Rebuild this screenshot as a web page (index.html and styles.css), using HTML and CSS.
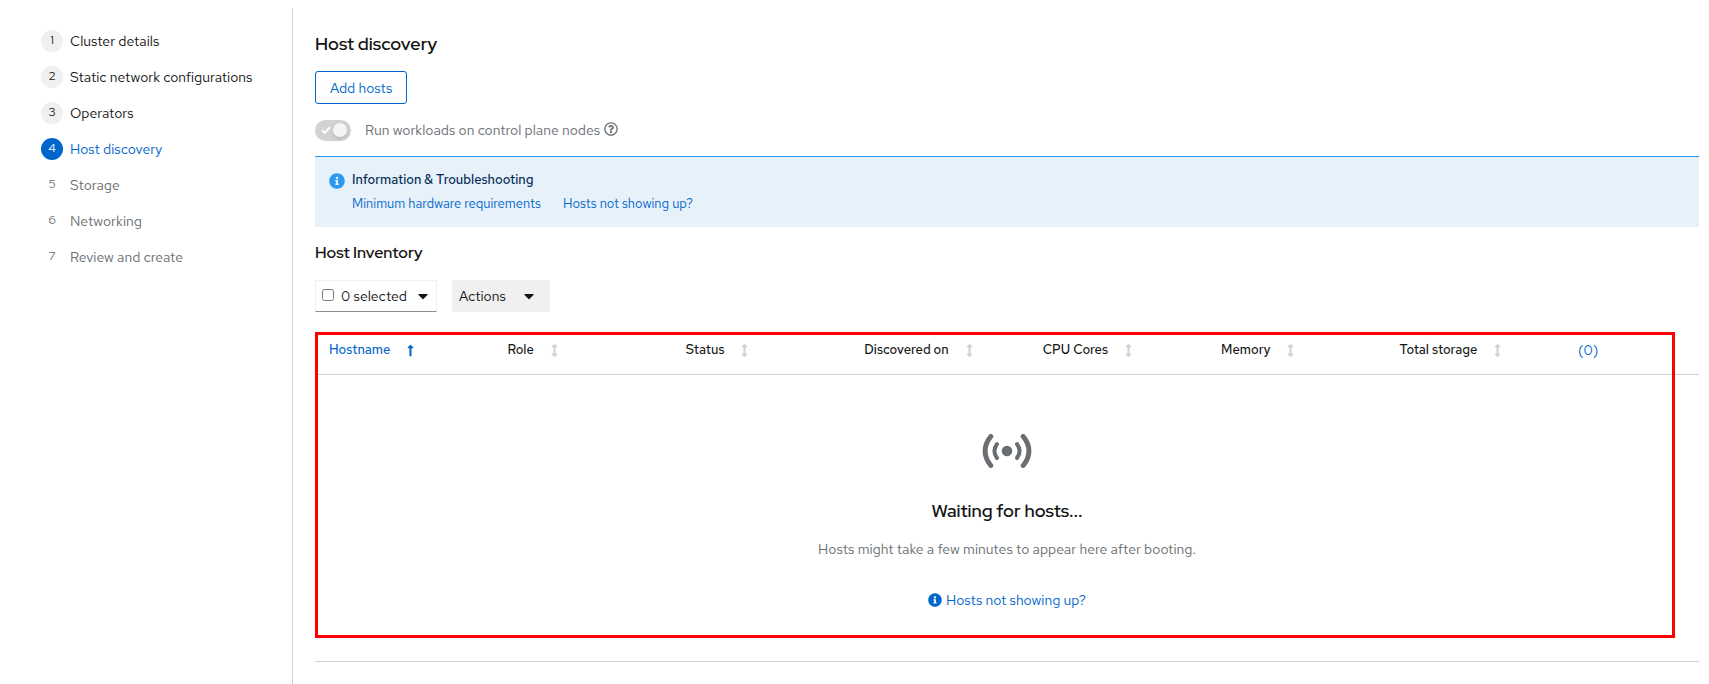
FILE: index.html
```html
<!DOCTYPE html>
<html lang="en">
<head>
<meta charset="utf-8">
<title>Host discovery</title>
<link rel="stylesheet" href="styles.css">
</head>
<body>
<svg class="sprite" aria-hidden="true">
  <symbol id="info" viewBox="0 0 512 512"><path d="M256 8C119.043 8 8 119.083 8 256c0 136.997 111.043 248 248 248s248-111.003 248-248C504 119.083 392.957 8 256 8zm0 110c23.196 0 42 18.804 42 42s-18.804 42-42 42-42-18.804-42-42 18.804-42 42-42zm56 254c0 6.627-5.373 12-12 12h-88c-6.627 0-12-5.373-12-12v-24c0-6.627 5.373-12 12-12h12v-64h-12c-6.627 0-12-5.373-12-12v-24c0-6.627 5.373-12 12-12h64c6.627 0 12 5.373 12 12v100h12c6.627 0 12 5.373 12 12v24z"/></symbol>
  <symbol id="question" viewBox="0 0 512 512"><path d="M256 8C119.043 8 8 119.083 8 256c0 136.997 111.043 248 248 248s248-111.003 248-248C504 119.083 392.957 8 256 8zm0 448c-110.532 0-200-89.431-200-200 0-110.495 89.472-200 200-200 110.491 0 200 89.471 200 200 0 110.53-89.431 200-200 200zm107.244-255.2c0 67.052-72.421 68.084-72.421 92.863V300c0 6.627-5.373 12-12 12h-45.647c-6.627 0-12-5.373-12-12v-8.659c0-35.745 27.1-50.034 47.579-61.516 17.561-9.845 28.324-16.541 28.324-29.579 0-17.246-21.999-28.693-39.784-28.693-23.189 0-33.894 10.977-48.942 29.969-4.057 5.12-11.46 6.071-16.666 2.124l-27.824-21.098c-5.107-3.872-6.251-11.066-2.644-16.363C184.846 131.491 214.94 112 261.794 112c49.071 0 101.45 38.304 101.45 88.8zM298 368c0 23.159-18.841 42-42 42s-42-18.841-42-42 18.841-42 42-42 42 18.841 42 42z"/></symbol>
  <symbol id="up" viewBox="0 0 256 512"><path d="M88 166.059V468c0 6.627 5.373 12 12 12h56c6.627 0 12-5.373 12-12V166.059h46.059c21.382 0 32.09-25.851 16.971-40.971l-86.059-86.059c-9.373-9.373-24.569-9.373-33.941 0l-86.059 86.059c-15.119 15.119-4.411 40.971 16.971 40.971H88z"/></symbol>
  <symbol id="updown" viewBox="0 0 256 512"><path d="M214.059 377.941H168V134.059h46.059c21.382 0 32.09-25.851 16.971-40.971L144.971 7.029c-9.373-9.373-24.568-9.373-33.941 0L24.971 93.088c-15.119 15.119-4.411 40.971 16.971 40.971H88v243.882H41.941c-21.382 0-32.09 25.851-16.971 40.971l86.059 86.059c9.373 9.373 24.568 9.373 33.941 0l86.059-86.059c15.12-15.119 4.412-40.971-16.97-40.971z"/></symbol>
  <symbol id="caret" viewBox="0 0 320 512"><path d="M31.3 192h257.3c17.8 0 26.7 21.5 14.1 34.1L174.1 354.8c-7.8 7.8-20.5 7.8-28.3 0L17.2 226.1C4.6 213.5 13.5 192 31.3 192z"/></symbol>
</svg>
<div class="layout">
  <nav class="steps" aria-label="Wizard steps">
    <ol>
      <li><a href="#"><span class="num">1</span>Cluster details</a></li>
      <li><a href="#"><span class="num">2</span>Static network configurations</a></li>
      <li><a href="#"><span class="num">3</span>Operators</a></li>
      <li class="current"><a href="#" aria-current="step"><span class="num">4</span>Host discovery</a></li>
      <li class="pending"><a href="#"><span class="num">5</span>Storage</a></li>
      <li class="pending"><a href="#"><span class="num">6</span>Networking</a></li>
      <li class="pending"><a href="#"><span class="num">7</span>Review and create</a></li>
    </ol>
  </nav>
  <main class="content">
    <h2 class="title">Host discovery</h2>
    <button class="add" type="button">Add hosts</button>
    <div class="switch-row">
      <label class="switch">
        <input type="checkbox" role="switch" checked disabled>
        <span class="track"><svg class="tick" viewBox="0 0 10 8"><path d="M1 4.200 3.700 6.800 9 1.300"/></svg><span class="thumb"></span></span>
        <span>Run workloads on control plane nodes</span>
      </label>
      <button class="help" type="button" aria-label="Help"><svg><use href="#question"/></svg></button>
    </div>
    <section class="alert">
      <svg class="alert-icon"><use href="#info"/></svg>
      <div>
        <h4>Information &amp; Troubleshooting</h4>
        <div class="alert-links"><a href="#">Minimum hardware requirements</a><a href="#">Hosts not showing up?</a></div>
      </div>
    </section>
    <h3 class="subtitle">Host Inventory</h3>
    <div class="toolbar">
      <div class="bulk">
        <input type="checkbox" id="select-all" aria-label="Select all hosts">
        <button type="button">0 selected<svg class="caret"><use href="#caret"/></svg></button>
      </div>
      <button class="actions" type="button">Actions<svg class="caret"><use href="#caret"/></svg></button>
    </div>
    <div class="inventory">
      <table>
        <thead>
          <tr>
            <th class="sorted" aria-sort="ascending"><button type="button">Hostname<svg><use href="#up"/></svg></button></th>
            <th><button type="button">Role<svg><use href="#updown"/></svg></button></th>
            <th><button type="button">Status<svg><use href="#updown"/></svg></button></th>
            <th><button type="button">Discovered on<svg><use href="#updown"/></svg></button></th>
            <th><button type="button">CPU Cores<svg><use href="#updown"/></svg></button></th>
            <th><button type="button">Memory<svg><use href="#updown"/></svg></button></th>
            <th><button type="button">Total storage<svg><use href="#updown"/></svg></button></th>
            <th class="count"><a href="#">(0)</a></th>
          </tr>
        </thead>
        <tbody>
          <tr>
            <td colspan="8">
              <div class="empty">
                <svg class="signal" viewBox="0 0 50 34"><g><path d="M8.800 2.500C1.200 11.500 1.200 22.500 8.800 31.500M41.200 2.500C48.800 11.500 48.800 22.500 41.200 31.500"/><path class="inner" d="M15 10C11.700 14.500 11.700 19.500 15 24M35 10C38.300 14.500 38.300 19.500 35 24"/></g><circle cx="25" cy="17" r="5.300"/></svg>
                <h4>Waiting for hosts...</h4>
                <p>Hosts might take a few minutes to appear here after booting.</p>
                <a href="#"><svg><use href="#info"/></svg>Hosts not showing up?</a>
              </div>
            </td>
          </tr>
        </tbody>
      </table>
      <div class="highlight"></div>
    </div>
  </main>
</div>
</body>
</html>
```
FILE: styles.css
```css
* { box-sizing: border-box; }
body {
  margin: 0;
  background: #fff;
  color: #151515;
  font: 14px/20px "Red Hat Text", Lato, sans-serif;
}
button { font: inherit; color: inherit; background: none; border: 0; padding: 0; margin: 0; }
h2, h3, h4, p, ol { margin: 0; padding: 0; }
h2, h3, .empty h4 { font-family: "Red Hat Display", Inter, sans-serif; }
a { color: #06c; text-decoration: none; }
svg { fill: currentColor; }
.sprite { display: none; }

.layout { display: flex; min-height: 100vh; padding: 8px 10px 0 0; }
.steps { flex: 0 0 293px; border-right: 1px solid #d2d2d2; padding: 22px 20px 0 41px; }
.steps ol { list-style: none; display: grid; gap: 14px; }
.steps a { display: flex; align-items: center; gap: 7px; color: #151515; line-height: 22px; white-space: nowrap; }
.num { flex: none; width: 22px; height: 22px; border-radius: 50%; background: #f0f0f0; text-align: center; font-size: 12px; line-height: 20px; }
.steps .current a { color: #06c; }
.steps .current .num { background: #06c; color: #fff; }
.steps .pending a { color: #6a6e73; }
.steps .pending .num { background: none; }

.content { flex: 1; min-width: 0; padding: 24px 0 0 22px; }
.title { font-size: 18px; line-height: 24px; font-weight: 600; }
.add { display: block; margin-top: 15px; height: 33px; padding: 0 14px; border: 1px solid #06c; border-radius: 3px; color: #06c; }
.switch-row { display: flex; align-items: center; gap: 4px; margin-top: 15px; height: 22px; color: #6a6e73; }
.switch { display: flex; align-items: center; gap: 14px; line-height: 22px; }
.switch input { position: absolute; opacity: 0; }
.track { display: flex; align-items: center; justify-content: space-between; width: 36px; height: 21px; padding: 0 4px 0 6px; border-radius: 11px; background: #d2d2d2; }
.tick { width: 10px; height: 8px; fill: none; stroke: #fff; stroke-width: 2; }
.thumb { width: 14px; height: 14px; border-radius: 50%; background: #f5f5f5; box-shadow: 0 2px 4px rgba(0, 0, 0, .12); }
.help { display: flex; padding-bottom: 2px; }
.help svg { width: 14px; height: 14px; }

.alert { display: flex; gap: 7px; margin-top: 15px; padding: 13px 14px 14px; border-top: 1px solid #2b9af3; background: #e7f1fa; }
.alert-icon { flex: none; width: 16px; height: 16px; margin-top: 3px; color: #2b9af3; }
.alert h4 { font-size: 13px; line-height: 20px; font-weight: 500; color: #002952; }
.alert-links { display: flex; gap: 22px; margin-top: 5px; font-size: 13px; line-height: 18px; }

.subtitle { margin-top: 15px; font-size: 16px; line-height: 22px; font-weight: 600; }
.toolbar { display: flex; gap: 15px; margin-top: 16px; }
.bulk { display: flex; align-items: center; height: 32px; padding: 0 8px 0 6px; border: 1px solid #f0f0f0; border-bottom-color: #8a8d90; }
.bulk input { width: 12px; height: 12px; margin: 0 7px 2px 0; }
.bulk button, .actions { display: flex; align-items: center; gap: 11px; }
.caret { width: 10px; height: 16px; }
.actions { height: 32px; padding: 0 16px 0 7px; gap: 18px; background: #f0f0f0; }

.inventory { position: relative; margin-top: 20px; }
table { width: 100%; border-collapse: separate; border-spacing: 0; table-layout: fixed; }
th { padding: 8px 0 14px 14px; border-bottom: 1px solid #d2d2d2; text-align: left; font-size: 13px; line-height: 20px; font-weight: 500; }
.count { width: 135px; font-size: 14px; font-weight: 400; }
th button { display: flex; align-items: center; gap: 17px; white-space: nowrap; }
th svg { width: 7px; height: 13px; color: #d2d2d2; }
.sorted, .sorted svg { color: #06c; }
td { padding: 0; border-bottom: 1px solid #d2d2d2; }
.empty { display: flex; flex-direction: column; align-items: center; padding: 59px 0 51px; }
.signal { width: 50px; height: 34px; color: #6a6e73; }
.signal g { fill: none; stroke: currentColor; stroke-width: 5; stroke-linecap: round; }
.signal .inner { stroke-width: 4; }
.empty h4 { margin-top: 31px; font-size: 18px; line-height: 24px; font-weight: 600; }
.empty p { margin-top: 16px; color: #6a6e73; }
.empty a { display: flex; align-items: center; gap: 4px; margin-top: 31px; }
.empty a svg { width: 14px; height: 14px; }

/* Callout frame drawn over the inventory table */
.highlight { position: absolute; inset: 0 24px 24px 0; border: 3px solid #f00; pointer-events: none; }
```
